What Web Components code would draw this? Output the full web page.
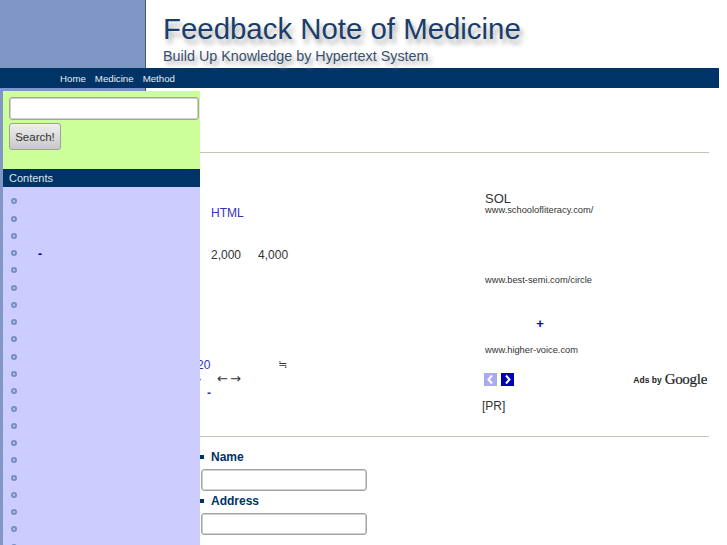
<!DOCTYPE html>
<html lang="en">
<head>
<meta charset="utf-8">
<title>Feedback Note of Medicine</title>
<style>
  html, body { margin: 0; height: 100%; overflow: hidden; background: #fff; }
  body { font-family: "Liberation Sans", Arial, sans-serif; color: #333; }
</style>
</head>
<body>
<fn-header>
  <span slot="title">Feedback Note of Medicine</span>
  <span slot="tagline">Build Up Knowledge by Hypertext System</span>
</fn-header>
<fn-nav>
  <a>Home</a>
  <a>Medicine</a>
  <a>Method</a>
</fn-nav>
<fn-page>
  <fn-sidebar slot="side" heading="Contents">
    <fn-toc-item></fn-toc-item>
    <fn-toc-item></fn-toc-item>
    <fn-toc-item></fn-toc-item>
    <fn-toc-item><b>-</b></fn-toc-item>
    <fn-toc-item></fn-toc-item>
    <fn-toc-item></fn-toc-item>
    <fn-toc-item></fn-toc-item>
    <fn-toc-item></fn-toc-item>
    <fn-toc-item></fn-toc-item>
    <fn-toc-item></fn-toc-item>
    <fn-toc-item></fn-toc-item>
    <fn-toc-item></fn-toc-item>
    <fn-toc-item></fn-toc-item>
    <fn-toc-item></fn-toc-item>
    <fn-toc-item></fn-toc-item>
    <fn-toc-item></fn-toc-item>
    <fn-toc-item></fn-toc-item>
    <fn-toc-item></fn-toc-item>
    <fn-toc-item></fn-toc-item>
    <fn-toc-item></fn-toc-item>
    <fn-toc-item></fn-toc-item>
  </fn-sidebar>
  <fn-article>
    <fn-ad url="www.schoolofliteracy.com/" heading="SOL" gap="0" slot="ads"></fn-ad>
    <fn-ad url="www.best-semi.com/circle" gap="59" slot="ads"></fn-ad>
    <fn-ad url="www.higher-voice.com" gap="30" slot="ads"><b style="display:block;margin-bottom:14px;color:#0000cc">+</b></fn-ad>
    <fn-field label="Name" slot="form"></fn-field>
    <fn-field label="Address" slot="form"></fn-field>
  </fn-article>
</fn-page>

<script>
class FnHeader extends HTMLElement {
  constructor() {
    super()
    this.attachShadow({ mode: "open" }).innerHTML = `<style>
      :host { display: flex; height: 68px; }
      .block { width: 145px; background: #8096c4; border-right: 1px solid #4a5570; flex: none; }
      .text { padding: 11px 0 0 17px; white-space: nowrap; }
      .title { font-size: 29.4px; line-height: 36px; color: #1b3d6b; text-shadow: 3px 5px 5px #aaa; }
      .tagline { font-size: 14.35px; line-height: 18px; color: #3a5070; text-shadow: 3px 4px 4px #aaa; }
    </style>
    <div class="block"></div>
    <div class="text">
      <div class="title"><slot name="title"></slot></div>
      <div class="tagline"><slot name="tagline"></slot></div>
    </div>`
  }
}
customElements.define("fn-header", FnHeader)

class FnNav extends HTMLElement {
  constructor() {
    super()
    this.attachShadow({ mode: "open" }).innerHTML = `<style>
      :host { display: flex; gap: 9px; width: 719px; box-sizing: border-box; height: 20px; align-items: center; padding-left: 60px;
        background: #003366; color: #e8eef4; font-size: 9.7px; }
    </style><slot></slot>`
  }
}
customElements.define("fn-nav", FnNav)

class FnPage extends HTMLElement {
  constructor() {
    super()
    this.attachShadow({ mode: "open" }).innerHTML = `<style>
      :host { display: grid; grid-template-columns: 197px 1fr; height: 457px; padding: 3px 0 0 3px; box-sizing: border-box;
        background:
          linear-gradient(#8096c4, #8096c4) 0 0 / 3px 100% no-repeat,
          linear-gradient(#4a5570, #4a5570) 145px 0 / 1px 3px no-repeat,
          linear-gradient(#8096c4, #8096c4) 0 0 / 145px 3px no-repeat; }
      ::slotted([slot="side"]) { z-index: 2; }
    </style><slot name="side"></slot><slot></slot>`
  }
}
customElements.define("fn-page", FnPage)

class FnSidebar extends HTMLElement {
  constructor() {
    super()
    this.attachShadow({ mode: "open" }).innerHTML = `<style>
      :host { display: block; background: #ccccff; overflow: hidden; }
      .search { background: #ccff99; height: 78px; box-sizing: border-box; padding: 6px; }
      input { display: block; box-sizing: border-box; width: 190px; height: 23px; margin: 0 0 3px; background: #fff;
        border: 1px solid #a4a4a4; box-shadow: inset 0 0 0 1px #d0d0d0; border-radius: 3px; }
      button { display: block; width: 52px; height: 27px; padding: 0; border: 1px solid #a0a0a0; border-radius: 3px;
        background: linear-gradient(#efefef, #c8c8c8); font: 11.5px "Liberation Sans", Arial, sans-serif; color: #333; }
      h2 { margin: 0; height: 18px; padding-left: 6px; background: #003366; color: #dfe6ee;
        font: 400 11px/18px "Liberation Sans", Arial, sans-serif; }
      ul { margin: 0; padding: 5.7px 0 0 8px; list-style: none; }
    </style>
    <div class="search"><input type="text"><button>Search!</button></div>
    <h2></h2>
    <ul><slot></slot></ul>`
    this.shadowRoot.querySelector("h2").textContent = this.getAttribute("heading")
  }
}
customElements.define("fn-sidebar", FnSidebar)

class FnTocItem extends HTMLElement {
  constructor() {
    super()
    this.attachShadow({ mode: "open" }).innerHTML = `<style>
      :host { display: flex; align-items: center; height: 17.27px; font-size: 12px; line-height: 17.27px; }
      i { width: 6px; height: 6px; box-sizing: border-box; flex: none; margin-right: 21px;
        border: 2px solid #7390c2; border-radius: 50%; }
      ::slotted(b) { color: #000099; margin-top: 3px; }
    </style><i></i><slot></slot>`
  }
}
customElements.define("fn-toc-item", FnTocItem)

class FnArticle extends HTMLElement {
  constructor() {
    super()
    this.attachShadow({ mode: "open" }).innerHTML = `<style>
      :host { display: block; padding-right: 18px; font-size: 12px; color: #333; min-width: 0; }
      hr { margin: 0; border: 0; height: 1px; background: #c4c4b0; }
      .top { height: 61px; }
      .cols { display: grid; grid-template-columns: 281px 1fr; height: 283px; }
      .left { padding-left: 11px; line-height: 16px; }
      .link { color: #3333bb; }
      .html { margin-top: 52px; }
      .nums { margin-top: 26px; display: flex; gap: 17px; }
      .issue { margin: 94px 0 0 -14px; display: flex; }
      .eq { margin-left: 68px; font: 11px/16px "DejaVu Sans", sans-serif; }
      .arrows { margin: -2px 0 0 -13px; display: flex; gap: 15px; }
      .arrows .a { font: 13px/16px "DejaVu Sans", sans-serif; word-spacing: -2px; }
      .dash { margin: -2px 0 0 -4px; font-weight: 700; }
      .ads { padding-left: 4px; }
      .spacer { height: 38.5px; }
      .pager { display: flex; align-items: center; height: 16px; margin: 16px 0 0 -1px; gap: 4px; }
      .pager svg { display: block; }
      .by { margin-left: auto; display: flex; align-items: center; gap: 3px; margin-right: 2px; color: #222; }
      .by b { font-size: 8.5px; }
      .by span { font: 400 15px "Liberation Serif", serif; letter-spacing: -.3px; color: #222; -webkit-text-stroke: .2px #222; }
      .pr { margin: 10.5px 0 0 -3px; line-height: 16px; }
      .form { margin-top: 12px; }
    </style>
    <div class="top"></div>
    <hr>
    <div class="cols">
      <div class="left">
        <div class="html link">HTML</div>
        <div class="nums"><span>2,000</span><span>4,000</span></div>
        <div class="issue"><span class="link">20</span><span class="eq">≒</span></div>
        <div class="arrows"><span>·</span><span class="a">← →</span></div>
        <div class="dash link">-</div>
      </div>
      <div class="ads">
        <div class="spacer"></div>
        <slot name="ads"></slot>
        <div class="pager">
          <svg width="13" height="13" viewBox="0 0 13 13"><rect width="13" height="13" fill="#aaaaee"/><path d="M8 2.5 4.5 6.5 8 10.5" fill="none" stroke="#fff" stroke-width="2"/></svg>
          <svg width="13" height="13" viewBox="0 0 13 13"><rect width="13" height="13" fill="#0000bb"/><path d="M5 2.5 8.5 6.5 5 10.5" fill="none" stroke="#fff" stroke-width="2"/></svg>
          <div class="by"><b>Ads by</b><span>Google</span></div>
        </div>
        <div class="pr">[PR]</div>
      </div>
    </div>
    <hr>
    <div class="form"><slot name="form"></slot></div>`
  }
}
customElements.define("fn-article", FnArticle)

class FnAd extends HTMLElement {
  constructor() {
    super()
    this.attachShadow({ mode: "open" }).innerHTML = `<style>
      :host { display: block; color: #333; }
      .head { font-size: 13px; line-height: 13px; color: #333; }
      .extra { text-align: center; width: 110px; font-size: 13px; line-height: 15px; }
      .url { font-size: 9.3px; line-height: 11px; }
    </style>
    <div class="head"></div>
    <div class="extra"><slot></slot></div>
    <div class="url"></div>`
    this.shadowRoot.querySelector(".head").textContent = this.getAttribute("heading") || ""
    this.shadowRoot.querySelector(".url").textContent = this.getAttribute("url")
    this.style.marginTop = (this.getAttribute("gap") || 0) + "px"
  }
}
customElements.define("fn-ad", FnAd)

class FnField extends HTMLElement {
  constructor() {
    super()
    this.attachShadow({ mode: "open" }).innerHTML = `<style>
      :host { display: block; margin-bottom: 2px; }
      label { display: block; padding-left: 11px; color: #003366; font-size: 12px; font-weight: 700; line-height: 16px; }
      label::before { content: ""; display: inline-block; width: 4px; height: 4px; margin: 0 7px 2px -11px; background: #003366; }
      input { display: block; box-sizing: border-box; width: 166px; height: 22px; margin: 4px 0 0 1px; background: #fff;
        border: 1px solid #a4a4a4; box-shadow: inset 0 0 0 1px #d0d0d0; border-radius: 3px; }
    </style>
    <label></label><input type="text">`
    this.shadowRoot.querySelector("label").textContent = this.getAttribute("label")
  }
}
customElements.define("fn-field", FnField)
</script>
</body>
</html>
